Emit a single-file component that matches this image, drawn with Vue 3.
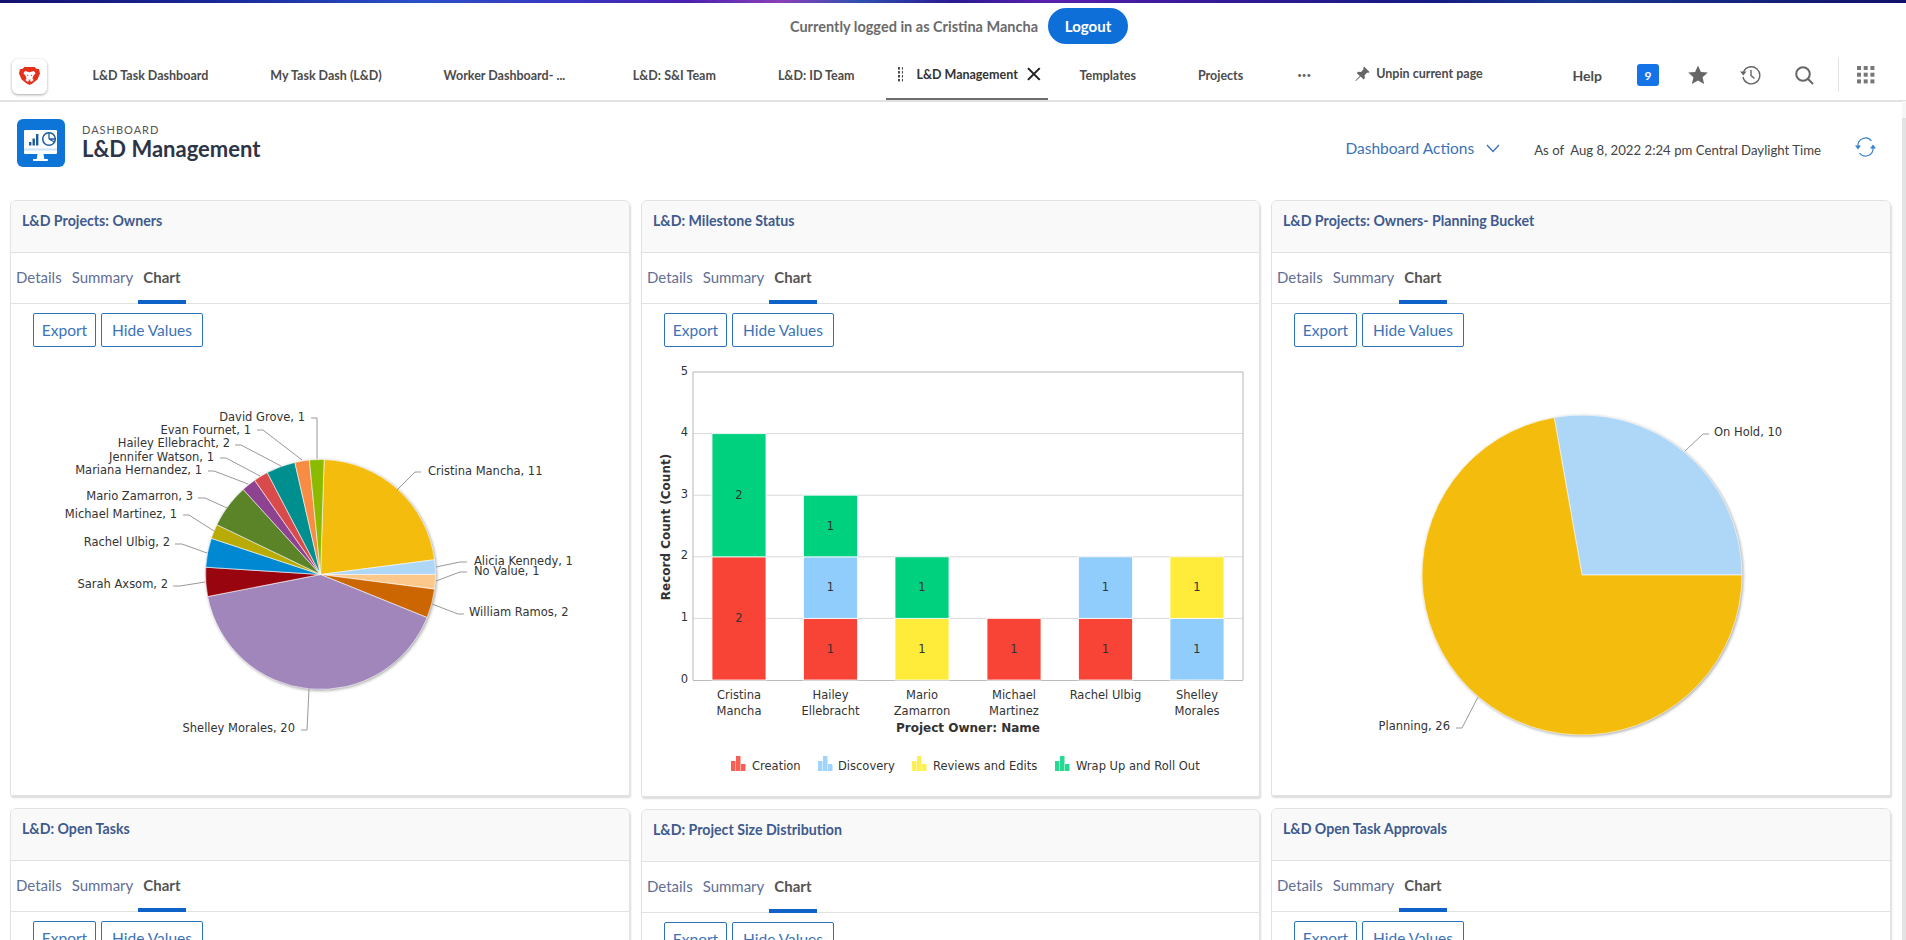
<script setup>
const tabs = ['L&D Task Dashboard', 'My Task Dash (L&D)', 'Worker Dashboard- ...', 'L&D: S&I Team', 'L&D: ID Team']

function point(cx, cy, r, deg) {
  const a = (deg - 90) * Math.PI / 180
  return [cx + r * Math.cos(a), cy + r * Math.sin(a)]
}
function buildPie(pie) {
  const total = pie.slices.reduce((s, x) => s + x.value, 0)
  let angle = pie.start
  return {
    ...pie,
    slices: pie.slices.map(s => {
      const end = angle + s.value / total * 360
      const [x0, y0] = point(pie.cx, pie.cy, pie.r, angle)
      const [x1, y1] = point(pie.cx, pie.cy, pie.r, end)
      const large = end - angle > 180 ? 1 : 0
      const d = `M${pie.cx} ${pie.cy}L${x0.toFixed(2)} ${y0.toFixed(2)}A${pie.r} ${pie.r} 0 ${large} 1 ${x1.toFixed(2)} ${y1.toFixed(2)}Z`
      angle = end
      return { ...s, d }
    })
  }
}

const ownersPie = buildPie({
  cx: 319.5, cy: 575.5, r: 115, start: 1.8, box: '10 350 620 440',
  slices: [
    { name: 'Cristina Mancha', value: 11, color: '#f4bd0e', x: 427, y: 472, anchor: 'start', lead: '420,473 414,473 396,491' },
    { name: 'Alicia Kennedy', value: 1, color: '#aed6f7', x: 473, y: 562, anchor: 'start', lead: '466,563 459,563 435,568' },
    { name: 'No Value', value: 1, color: '#fcc88c', x: 473, y: 572, anchor: 'start', lead: '466,573 459,573 435,582' },
    { name: 'William Ramos', value: 2, color: '#cc6600', x: 468, y: 613, anchor: 'start', lead: '463,615 457,615 431,605' },
    { name: 'Shelley Morales', value: 20, color: '#a186bc', x: 294, y: 729, anchor: 'end', lead: '300,731 306,731 308,690' },
    { name: 'Sarah Axsom', value: 2, color: '#99050f', x: 167, y: 585, anchor: 'end', lead: '172,587 179,587 204,583' },
    { name: 'Rachel Ulbig', value: 2, color: '#0089d2', x: 169, y: 543, anchor: 'end', lead: '174,545 181,545 206,554' },
    { name: 'Michael Martinez', value: 1, color: '#b9ab05', x: 176, y: 515, anchor: 'end', lead: '182,516 188,516 213,532' },
    { name: 'Mario Zamarron', value: 3, color: '#5b8328', x: 192, y: 497, anchor: 'end', lead: '197,499 204,499 226,509' },
    { name: 'Mariana Hernandez', value: 1, color: '#8e4391', x: 201, y: 471, anchor: 'end', lead: '207,472 213,472 247,485' },
    { name: 'Jennifer Watson', value: 1, color: '#d94a4a', x: 213, y: 458, anchor: 'end', lead: '219,459 225,459 259,477' },
    { name: 'Hailey Ellebracht', value: 2, color: '#008f8f', x: 229, y: 444, anchor: 'end', lead: '234,446 240,446 280,467' },
    { name: 'Evan Fournet', value: 1, color: '#f78c42', x: 250, y: 431, anchor: 'end', lead: '256,431 262,431 301,461' },
    { name: 'David Grove', value: 1, color: '#8cba00', x: 304, y: 418, anchor: 'end', lead: '310,419 316,419 316,460' }
  ]
})

const bucketPie = buildPie({
  cx: 1581, cy: 576, r: 160, start: -10, box: '1271 350 620 440',
  slices: [
    { name: 'On Hold', value: 10, color: '#aed6f7', x: 1713, y: 433, anchor: 'start', lead: '1708,435 1702,435 1684,452' },
    { name: 'Planning', value: 26, color: '#f4bd0e', x: 1449, y: 727.5, anchor: 'end', lead: '1455,729 1461,729 1477,698' }
  ]
})

const RED = '#f84437'
const BLUE = '#90cdfc'
const YEL = '#ffec3a'
const GRN = '#00d17f'
const zero = 681
const unit = 61.6

const bars = [
  { x: 711, lines: ['Cristina', 'Mancha'], segs: [[2, RED], [2, GRN]] },
  { x: 802.5, lines: ['Hailey', 'Ellebracht'], segs: [[1, RED], [1, BLUE], [1, GRN]] },
  { x: 894, lines: ['Mario', 'Zamarron'], segs: [[1, YEL], [1, GRN]] },
  { x: 986, lines: ['Michael', 'Martinez'], segs: [[1, RED]] },
  { x: 1077.5, lines: ['Rachel Ulbig'], segs: [[1, RED], [1, BLUE]] },
  { x: 1169, lines: ['Shelley', 'Morales'], segs: [[1, BLUE], [1, YEL]] }
].map(b => {
  let base = 0
  return {
    ...b,
    cx: b.x + 27,
    segs: b.segs.map(([v, color]) => {
      const top = base + v
      const seg = { v, color, y: zero - top * unit, h: v * unit, my: zero - (base + v / 2) * unit }
      base = top
      return seg
    })
  }
})

const ticks = [0, 1, 2, 3, 4, 5].map(v => ({ v, y: zero - v * unit }))
const legend = [
  { label: 'Creation', color: RED, ix: 730, tx: 751 },
  { label: 'Discovery', color: BLUE, ix: 817, tx: 837 },
  { label: 'Reviews and Edits', color: YEL, ix: 911, tx: 932 },
  { label: 'Wrap Up and Roll Out', color: GRN, ix: 1054, tx: 1075 }
]

const columns = [
  [{ title: 'L&D Projects: Owners', chart: 'owners' }, { title: 'L&D: Open Tasks' }],
  [{ title: 'L&D: Milestone Status', chart: 'bars' }, { title: 'L&D: Project Size Distribution' }],
  [{ title: 'L&D Projects: Owners- Planning Bucket', chart: 'bucket' }, { title: 'L&D Open Task Approvals' }]
]
</script>

<template>
  <div class="page">
    <div class="strip"></div>
    <div class="login-row">
      <span class="login-text">Currently logged in as Cristina Mancha</span>
      <button class="logout">Logout</button>
    </div>

    <nav class="nav">
      <div class="brand">
        <svg width="21" height="18" viewBox="1 2 22 21" preserveAspectRatio="none">
          <path fill="#e5301c" d="M6.5 2h11l1.6 1.900 2.900.6 1 5-2.700 7.200L15 21.300 12 23l-3-1.700-5.300-4.600L1 9.500l1-5 2.900-.6z" />
          <path fill="#fff" d="M7.400 6.800 12 8.200l4.600-1.400 1.800 2.400-2.500 3.400-.8 3.200 1.300 1.400-2.400 2-2-1.200-2 1.200-2.400-2 1.300-1.400-.8-3.200-2.500-3.400z" />
          <path fill="#e5301c" d="M9 10.700l2 .8-1 1.200zm6 0-2 .8 1 1.200zM10.300 17h3.400L12 18.200z" />
        </svg>
      </div>
      <a v-for="t in tabs" :key="t" class="nav-tab">{{ t }}</a>
      <a class="nav-tab active">
        <svg class="grip" width="6" height="15" viewBox="0 0 6 15"><g fill="#444"><rect v-for="n in 4" :key="'l' + n" x="0" :y="(n - 1) * 4" width="2" height="2.500" /><rect v-for="n in 4" :key="'r' + n" x="4" :y="(n - 1) * 4" width="2" height="2.500" /></g></svg>
        <span>L&amp;D Management</span>
        <svg class="close" width="14" height="14" viewBox="0 0 14 14"><path d="M1 1l12 12M13 1 1 13" stroke="#222" stroke-width="2.100" fill="none" /></svg>
      </a>
      <a class="nav-tab plain">Templates</a>
      <a class="nav-tab plain">Projects</a>
      <span class="dots">•••</span>
      <span class="unpin">
        <svg width="15" height="16" viewBox="0 0 15 16"><path fill="#666" d="M9 .5l5.500 5.500-1.300 1-1-.4-2.600 2.600.2 3-1.200 1.200-3-3L1 15l-.6-.6 4.400-4.500-3-3L3 5.700l3 .2L8.600 3.300l-.4-1z" /></svg>
        Unpin current page
      </span>
      <div class="nav-right">
        <span class="help">Help</span>
        <span class="badge">9</span>
        <svg class="ic-star" width="20" height="20" viewBox="0 0 20 20"><path fill="#666" d="M10 .5l2.900 6.400 6.900.7-5.200 4.600 1.500 6.900L10 15.500l-6.100 3.600 1.500-6.900L.2 7.600l6.900-.7z" /></svg>
        <svg class="ic-hist" width="21" height="20" viewBox="0 0 21 20"><g fill="none" stroke="#666" stroke-width="1.400"><path d="M3.500 7A8.500 8.500 0 1 1 3 12" /><path d="M11 5v5.500l3.500 3" /></g><path fill="#666" d="M0 6.500h6.500L3.300 10.500z" /></svg>
        <svg class="ic-search" width="19" height="19" viewBox="0 0 19 19"><g fill="none" stroke="#666" stroke-width="2"><circle cx="8" cy="8" r="6.800" /><path d="M12.800 12.800 18 18" /></g></svg>
        <span class="divider"></span>
        <svg width="18" height="18" viewBox="0 0 18 18"><g fill="#777"><template v-for="r in 3" :key="r"><rect v-for="c in 3" :key="c" :x="(c - 1) * 6.700" :y="(r - 1) * 6.700" width="4" height="4" /></template></g></svg>
      </div>
    </nav>

    <header class="head">
      <div class="head-icon">
        <svg width="48" height="48" viewBox="0 0 48 48">
          <rect x="7" y="11" width="33" height="24" rx="1" fill="#fff" />
          <rect x="7" y="29.500" width="33" height="2" fill="#cfe4f8" />
          <path fill="#fff" d="M20.500 35h6l.8 5h3.500v2H16.200v-2h3.500z" />
          <rect x="12" y="23" width="2.400" height="3.500" fill="#1a5c9c" />
          <rect x="15.500" y="19.500" width="2.400" height="7" fill="#1a5c9c" />
          <rect x="19" y="15" width="2.400" height="11.500" fill="#1a5c9c" />
          <circle cx="32" cy="20" r="6.300" fill="none" stroke="#1a5c9c" stroke-width="1.500" />
          <path d="M32 20v-6.300M32 20l5.500 3M32 20h6.300" fill="none" stroke="#1a5c9c" stroke-width="1.300" />
        </svg>
      </div>
      <div class="head-text">
        <div class="eyebrow">DASHBOARD</div>
        <h1>L&amp;D Management</h1>
      </div>
      <div class="head-right">
        <span class="actions">Dashboard Actions</span>
        <svg class="chev" width="14" height="9" viewBox="0 0 14 9"><path d="M1 1l6 6.500L13 1" fill="none" stroke="#3b73b9" stroke-width="1.300" /></svg>
        <span class="asof">As of &nbsp;Aug 8, 2022 2:24 pm Central Daylight Time</span>
        <svg class="refresh" width="21" height="20" viewBox="0 0 21 20"><g fill="none" stroke="#3b83c9" stroke-width="1.200"><path d="M3 9a7.500 7.500 0 0 1 13.500-5" /><path d="M18 11a7.500 7.500 0 0 1-13.500 5" /></g><path fill="#3b83c9" d="M0 8.500h6L3 12.500zM15 11.500h6L18 7.500z" /></svg>
      </div>
    </header>

    <main class="grid">
      <div v-for="(col, ci) in columns" :key="ci" class="col" :class="'col' + ci">
        <section v-for="card in col" :key="card.title" class="card">
          <div class="card-head">{{ card.title }}</div>
          <div class="card-tabs">
            <span class="ctab">Details</span>
            <span class="ctab">Summary</span>
            <span class="ctab on">Chart</span>
          </div>
          <div class="card-tools">
            <button class="tool">Export</button>
            <button class="tool">Hide Values</button>
          </div>

          <svg v-if="card.chart === 'owners' || card.chart === 'bucket'" class="chart" width="620" height="440"
            :viewBox="(card.chart === 'owners' ? ownersPie : bucketPie).box">
            <g class="pie">
              <path v-for="s in (card.chart === 'owners' ? ownersPie : bucketPie).slices" :key="s.name" :d="s.d" :fill="s.color" stroke="#fff" stroke-width=".6" />
            </g>
            <g v-for="s in (card.chart === 'owners' ? ownersPie : bucketPie).slices" :key="s.name + 'l'">
              <polyline :points="s.lead" fill="none" stroke="#999" stroke-width="1" />
              <text class="lbl" :x="s.x" :y="s.y" :text-anchor="s.anchor" dominant-baseline="middle">{{ s.name }}, {{ s.value }}</text>
            </g>
          </svg>

          <svg v-else-if="card.chart === 'bars'" class="chart" width="619" height="440" viewBox="641 350 619 440">
            <line v-for="t in ticks.slice(1, 5)" :key="t.v" x1="692" x2="1242" :y1="t.y" :y2="t.y" stroke="#d8d8d8" stroke-width="1" />
            <path d="M692 681V373H1242V681" fill="none" stroke="#d0d0d0" stroke-width="1.500" />
            <line x1="692" x2="1242" y1="681.500" y2="681.500" stroke="#bbb" stroke-width="1" />
            <text v-for="t in ticks" :key="'t' + t.v" class="lbl" x="687" :y="t.y - 1" text-anchor="end" dominant-baseline="middle">{{ t.v }}</text>
            <g v-for="b in bars" :key="b.x">
              <g v-for="(s, si) in b.segs" :key="si">
                <rect :x="b.x" :y="s.y" width="54" :height="s.h" :fill="s.color" stroke="#fff" stroke-opacity=".8" stroke-width="1" />
                <text class="lbl" :x="b.cx" :y="s.my" text-anchor="middle" dominant-baseline="middle">{{ s.v }}</text>
              </g>
              <text v-for="(l, li) in b.lines" :key="l" class="lbl" :x="b.cx" :y="696 + li * 16" text-anchor="middle" dominant-baseline="middle">{{ l }}</text>
            </g>
            <text class="axis" x="967" y="729" text-anchor="middle" dominant-baseline="middle">Project Owner: Name</text>
            <text class="axis" transform="translate(665 528) rotate(-90)" text-anchor="middle" dominant-baseline="middle">Record Count (Count)</text>
            <g v-for="l in legend" :key="l.label">
              <g :fill="l.color" fill-opacity=".85">
                <rect :x="l.ix" y="762" width="4.500" height="10" />
                <rect :x="l.ix + 5" y="757" width="4.500" height="15" />
                <rect :x="l.ix + 10" y="765" width="4.500" height="7" />
              </g>
              <text class="lbl" :x="l.tx" y="767" dominant-baseline="middle">{{ l.label }}</text>
            </g>
          </svg>
        </section>
      </div>
    </main>

    <div class="scroll-track"><div class="scroll-thumb"></div></div>
  </div>
</template>

<style>
html, body { margin: 0; overflow: hidden; background: #fff; }
</style>

<style scoped>
.page {
  position: relative;
  height: 940px;
  overflow: hidden;
  background: #fff;
  font-family: Lato, "Open Sans", sans-serif;
  color: #444;
}
.strip {
  height: 3px;
  background: linear-gradient(90deg, #14106e 0%, #1a2a9a 12%, #2a50c8 22%, #3a35c0 30%, #4a20b0 36%, #8a40b8 41%, #3050b0 45%, #2a1a90 50%, #5a20b0 55%, #3a1a9a 62%, #141a80 75%, #1a3a90 82%, #10106a 100%);
}
.login-row {
  height: 47px;
  display: flex;
  align-items: center;
  justify-content: center;
  padding-left: 12px;
  gap: 10px;
}
.login-text { font-size: 14.500px; font-weight: 700; color: #6b6b6b; }
.logout {
  width: 80px;
  height: 36px;
  margin-top: -1px;
  border: 0;
  border-radius: 18px;
  background: #0f6fd8;
  color: #fff;
  font: 700 15px Lato, sans-serif;
}
.nav {
  height: 50px;
  display: flex;
  align-items: center;
  border-bottom: 2px solid #e2e2e2;
  box-sizing: content-box;
  padding-left: 12px;
}
.brand {
  width: 35px;
  height: 35px;
  margin-top: 2px;
  border-radius: 6px;
  background: #fff;
  box-shadow: 0 1px 3px rgba(0, 0, 0, .35);
  display: flex;
  align-items: center;
  justify-content: center;
  margin-right: 14.500px;
}
.nav-tab {
  height: 50px;
  display: flex;
  align-items: center;
  padding: 0 31px;
  font-size: 12.500px;
  font-weight: 700;
  color: #4b4b4b;
  white-space: nowrap;
  box-sizing: border-box;
}
.nav-tab:nth-child(4) { padding-right: 36.500px; }
.nav-tab.active {
  padding: 0 7px 0 12px;
  width: 162px;
  margin-right: 1px;
  color: #333;
  border-bottom: 2px solid #6d6d6d;
}
.grip { margin-right: 13px; }
.close { margin-left: 9px; }
.dots { font-size: 8px; color: #666; margin-left: 23px; }
.unpin {
  display: flex;
  align-items: center;
  gap: 6px;
  font-size: 12.500px;
  font-weight: 700;
  color: #4b4b4b;
  margin-left: 44px;
  margin-top: -3px;
}
.nav-right {
  margin-left: auto;
  display: flex;
  align-items: center;
  padding-right: 31px;
}
.help { font-size: 14px; font-weight: 700; color: #4b4b4b; margin-right: 35px; }
.badge {
  width: 22px;
  height: 22px;
  border-radius: 3px;
  background: #1473e6;
  color: #fff;
  font-size: 12px;
  font-weight: 700;
  display: flex;
  align-items: center;
  justify-content: center;
  margin-right: 29px;
}
.ic-star { margin-right: 32px; }
.ic-hist { margin-right: 34px; }
.ic-search { margin-right: 24px; }
.divider { width: 1px; height: 34px; background: #e4e4e4; margin-right: 18px; }

.head {
  height: 98px;
  display: flex;
  align-items: flex-start;
  padding: 17px 0 0 17px;
  box-sizing: border-box;
}
.head-icon {
  width: 48px;
  height: 48px;
  border-radius: 6px;
  background: #0d74d8;
  display: flex;
  align-items: center;
  justify-content: center;
}
.head-text { margin-left: 17px; }
.eyebrow { font-size: 11px; letter-spacing: 1px; color: #555; line-height: 13px; margin-top: 4px; }
h1 { margin: -1px 0 0; font-size: 22px; line-height: 27px; font-weight: 700; color: #2c3547; }
.head-right {
  margin-left: auto;
  display: flex;
  align-items: center;
  height: 30px;
  margin-top: 14px;
  padding-right: 30px;
}
.actions { font-size: 15.500px; color: #3b73b9; }
.chev { margin-left: 12px; margin-right: 34px; }
.asof { font-size: 13.200px; color: #444; margin-top: 3px; }
.refresh { margin-left: 34px; margin-top: -2px; }

.grid {
  display: grid;
  grid-template-columns: 620px 619px 620px;
  column-gap: 11px;
  padding-left: 10px;
}
.col { display: flex; flex-direction: column; gap: 12px; }
.card {
  height: 596px;
  box-sizing: border-box;
  border: 1px solid #e2e2e2;
  border-radius: 6px 6px 2px 2px;
  box-shadow: 1px 2px 2px rgba(0, 0, 0, .14);
  background: #fff;
  overflow: hidden;
  flex: none;
}
.col1 .card:first-child { height: 597px; }
.card-head {
  height: 52px;
  box-sizing: border-box;
  background: #f9f9f9;
  border-bottom: 1px solid #e2e2e2;
  padding: 11px 11px 0;
  font-size: 14.200px;
  line-height: 17px;
  font-weight: 700;
  color: #3e5a8e;
}
.card-tabs {
  height: 51px;
  box-sizing: border-box;
  display: flex;
  border-bottom: 1px solid #e2e2e2;
}
.ctab {
  padding: 0 5px;
  height: 51px;
  box-sizing: border-box;
  line-height: 48px;
  font-size: 15px;
  color: #5f6f96;
}
.ctab.on { font-weight: 700; color: #555; border-bottom: 4px solid #0f62c8; }
.card-tools {
  display: flex;
  gap: 5px;
  padding: 9px 0 0 22px;
}
.tool {
  width: 63px;
  height: 34px;
  padding: 0;
  box-sizing: border-box;
  border: 1px solid #2e74bb;
  border-radius: 2px;
  background: #fff;
  color: #3b73b9;
  font: 15.500px Lato, sans-serif;
}
.tool + .tool { width: 102px; }
.chart { display: block; margin-top: 2px; }
.pie { filter: drop-shadow(1px 1px 1.500px rgba(0, 0, 0, .35)); }
.lbl { font: 11.500px "DejaVu Sans", sans-serif; fill: #333; }
.axis { font: bold 12px "DejaVu Sans", sans-serif; fill: #333; }
.scroll-track {
  position: absolute;
  right: 0;
  top: 101px;
  bottom: 0;
  width: 4px;
  background: #f6f6f6;
}
.scroll-thumb {
  position: absolute;
  top: 17px;
  bottom: 0;
  left: 0;
  right: 0;
  background: #e3e3e3;
}
</style>
